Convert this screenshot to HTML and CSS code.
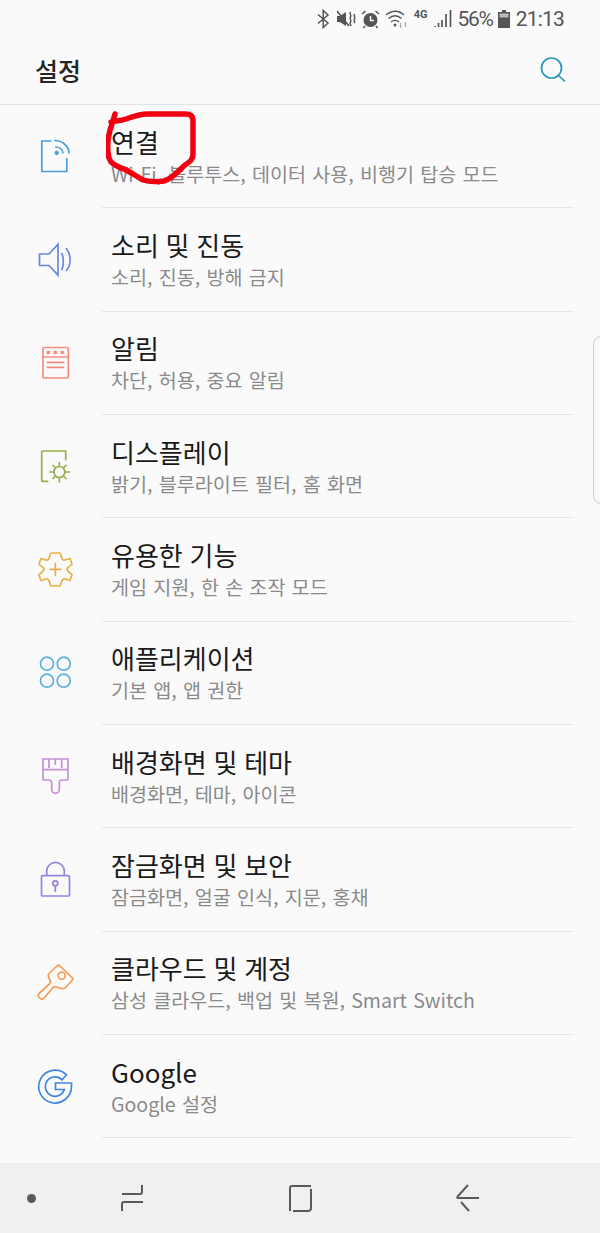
FILE: index.html
```html
<!DOCTYPE html>
<html lang="ko">
<head>
    <meta charset="UTF-8">
    <meta name="viewport" content="width=device-width, initial-scale=1.0">
    <title>설정</title>
    <link rel="stylesheet" href="styles.css">
</head>
<body>
    <div class="status-bar">
        <svg class="st-icon" width="13" height="20" viewBox="0 0 13 20"><path d="M1 5.500 11 14l-4.800 4.500V1.500L11 6 1 14.500" fill="none" stroke="#555" stroke-width="1.500"/></svg>
        <svg class="st-icon vol" width="20" height="20" viewBox="0 0 20 20"><path d="M0 7h3l6-4v14l-6-4H0z" fill="#555"/><path d="M0 2l12 15" stroke="#555" stroke-width="1.600"/><path d="M13.500 3c-1.500 2 1.500 3 0 5s1.500 3 0 5 1.500 3 0 4M17.500 5c-1.500 2 1.500 3 0 5s1 2 0 4" fill="none" stroke="#555" stroke-width="1.500"/></svg>
        <svg class="st-icon alarm" width="19" height="20" viewBox="0 0 19 20"><circle cx="9.500" cy="11" r="7" fill="#555"/><path d="M9.500 7v4.500h3.500" fill="none" stroke="#fafafa" stroke-width="1.500"/><path d="M1 5l3.500-3M18 5l-3.500-3M4 17l-1.500 2M15 17l1.500 2" stroke="#555" stroke-width="1.500"/></svg>
        <svg class="st-icon wifi" width="24" height="20" viewBox="0 0 24 20"><path d="M0 6c5.500-5 13-5 18 0M2.500 9.500c4-3.500 9-3.500 13 0M5 13c2.500-2 5.500-2 8 0" fill="none" stroke="#555" stroke-width="1.400"/><circle cx="9" cy="16" r="1.500" fill="#555"/><path d="M14.500 14v5M19.500 13v5" stroke="#aaa" stroke-width="1.300"/></svg>
        <span class="net">4G</span>
        <svg class="st-icon signal" width="18" height="20" viewBox="0 0 18 20"><path d="M1 18v-1M4.500 18v-4M8 18v-7M12 18V5M16.500 18V1" stroke="#555" stroke-width="1.700"/></svg>
        <span class="st-text">56%</span>
        <svg class="st-icon battery" width="12" height="20" viewBox="0 0 12 20"><path d="M4 1h4v2h4v16H0V3h4z" fill="#555"/><rect x="1.500" y="4.500" width="9" height="4" fill="#bbb"/></svg>
        <span class="st-text clock">21:13</span>
    </div>

    <div class="app-bar">
        <h1 class="app-title">설정</h1>
        <svg class="search" width="28" height="28" viewBox="0 0 28 28"><circle cx="12.500" cy="12" r="10" fill="none" stroke="#2b95bb" stroke-width="1.700"/><path d="M19.500 19.500l6.500 6" fill="none" stroke="#2b95bb" stroke-width="1.700"/></svg>
    </div>

    <ul class="menu">
        <li class="row">
            <svg class="icon" width="40" height="40" viewBox="0 0 40 40" stroke="#4a9fdc"><path d="M15.600 4H5.800v30.500h25V21"/><circle cx="20.700" cy="16" r="1.300" fill="#4a9fdc"/><path d="M19 10c4.500 0 8 2.500 8 6.500M18 3.500c8 0 15 5 15 13"/></svg>
            <div class="row-text"><div class="row-title">연결</div><div class="row-sub">Wi-Fi, 블루투스, 데이터 사용, 비행기 탑승 모드</div></div>
        </li>
        <li class="row">
            <svg class="icon" width="40" height="40" viewBox="0 0 40 40" stroke="#6a86e0"><path d="M3.500 14v11.500H13l9 9.500V4.500L13 14z"/><path d="M25.500 13c2.500 4 2.500 13 0 17M30 8c5.500 7 5.500 17 0 23"/></svg>
            <div class="row-text"><div class="row-title">소리 및 진동</div><div class="row-sub">소리, 진동, 방해 금지</div></div>
        </li>
        <li class="row">
            <svg class="icon" width="40" height="40" viewBox="0 0 40 40" stroke="#f48e84"><rect x="7" y="4.500" width="25.300" height="30.500" rx="1"/><path d="M7 14h25.300M10.700 19.300h17.600M10.700 24.400h17.600"/><g fill="#f48e84" stroke="none"><circle cx="12.300" cy="9.400" r="1.900"/><circle cx="19.300" cy="9.400" r="1.900"/><circle cx="26.300" cy="9.400" r="1.900"/></g></svg>
            <div class="row-text"><div class="row-title">알림</div><div class="row-sub">차단, 허용, 중요 알림</div></div>
        </li>
        <li class="row">
            <svg class="icon" width="40" height="40" viewBox="0 0 40 40" stroke="#93b04c"><path d="M29.700 13.300V4H6.700a1 1 0 0 0-1 1v28.300a1 1 0 0 0 1 1h5.600"/><circle cx="23.300" cy="25" r="5.500"/><path d="M23.300 15v4.500M23.300 30.500v5M13.300 25h4.500M29 25h5M16.500 18l3 3M27.500 29l3 3M30.500 18l-3 3M19.500 29l-3 3"/></svg>
            <div class="row-text"><div class="row-title">디스플레이</div><div class="row-sub">밝기, 블루라이트 필터, 홈 화면</div></div>
        </li>
        <li class="row">
            <svg class="icon" width="40" height="40" viewBox="0 0 40 40" stroke="#e9b04a"><path d="M15 3h9C25 3 25 9 27.500 10 30 11 33 8 34 8.500L36 14C36 15 31 17 31 19.300 31 21.600 36 24 36 25L34 30.500C33 31 30 28 27.500 29 25 30 25 36 24 36H15C14 36 14 30 11.500 29 9 28 6 31 5 30.500L3 25C3 24 8 21.600 8 19.300 8 17 3 15 3 14L5 8.500C6 8 9 11 11.500 10 14 9 14 3 15 3z"/><path d="M19.300 12.700V26M13.300 19.300h12.400"/></svg>
            <div class="row-text"><div class="row-title">유용한 기능</div><div class="row-sub">게임 지원, 한 손 조작 모드</div></div>
        </li>
        <li class="row">
            <svg class="icon" width="40" height="40" viewBox="0 0 40 40" stroke="#5cb1e0"><circle cx="11" cy="10.700" r="6.500"/><circle cx="27.700" cy="10.700" r="6.500"/><circle cx="11" cy="27.700" r="6.500"/><circle cx="27.700" cy="27.700" r="6.500"/></svg>
            <div class="row-text"><div class="row-title">애플리케이션</div><div class="row-sub">기본 앱, 앱 권한</div></div>
        </li>
        <li class="row">
            <svg class="icon" width="40" height="40" viewBox="0 0 40 40" stroke="#c491d2"><path d="M7 2h25v20c0 1-1 1-2 1h-4c-2 0-2.700 1-2.700 3v6.500a3.800 3.800 0 0 1-7.600 0V26c0-2-.7-3-2.700-3H9c-1 0-2 0-2-1zM7 12.600h25M13 2v9M19.300 2v6M25.700 2v9"/></svg>
            <div class="row-text"><div class="row-title">배경화면 및 테마</div><div class="row-sub">배경화면, 테마, 아이콘</div></div>
        </li>
        <li class="row">
            <svg class="icon" width="40" height="40" viewBox="0 0 40 40" stroke="#9a82dc"><rect x="5.500" y="15.700" width="28" height="20.300" rx="1"/><path d="M10.700 15.700v-4.500a8.800 8.800 0 0 1 17.600 0v4.500"/><circle cx="19.300" cy="23.300" r="2.500"/><path d="M19.300 25.800v6"/></svg>
            <div class="row-text"><div class="row-title">잠금화면 및 보안</div><div class="row-sub">잠금화면, 얼굴 인식, 지문, 홍채</div></div>
        </li>
        <li class="row">
            <svg class="icon" width="40" height="40" viewBox="0 0 40 40" stroke="#f49a55"><path d="M13 10.500 21 3C22 2 23 2 24 3L36 14.500C37 15.500 37 16.500 36 17.500L30 24C28.500 25.500 27 26 25 25.500L20.500 24C19 23.500 18 23.500 17 24.500L8.500 34.500C7 36.500 5 36.500 3.500 35 2 33.500 1.800 31.500 3.500 30L13.500 21C15 19.500 15 18.500 14 17L12.500 14C12 12.500 12 11.500 13 10.500z"/><circle cx="25.700" cy="12.700" r="3.500"/></svg>
            <div class="row-text"><div class="row-title">클라우드 및 계정</div><div class="row-sub">삼성 클라우드, 백업 및 복원, Smart Switch</div></div>
        </li>
        <li class="row">
            <svg class="icon" width="40" height="40" viewBox="0 0 40 40" stroke="#4285e0"><path d="M30.500 7.800A16.400 16.400 0 1 0 35.500 19.500V16H19.500V22.500H28.300A9.700 9.700 0 1 1 26 12.800z"/></svg>
            <div class="row-text"><div class="row-title">Google</div><div class="row-sub">Google 설정</div></div>
        </li>
    </ul>

    <div class="spacer"></div>

    <div class="nav-bar">
        <span class="nav-dot"></span>
        <svg class="nav-icon" width="24" height="28" viewBox="0 0 24 28"><path d="M22 1v7c0 1-1 2-2 2H2M23 18H4c-1 0-2 1-2 2v7"/></svg>
        <svg class="nav-icon" width="24" height="28" viewBox="0 0 24 28"><path d="M23 2H4C3 2 2 3 2 4v23M5 27h15c2 0 3-1 3-3V5"/></svg>
        <svg class="nav-icon" width="24" height="28" viewBox="0 0 24 28"><path d="M12 1L2 12c-1 1-1 2 0 2h21M5 18l8 9"/></svg>
    </div>

    <!-- 사진 위에 직접 그린 빨간 표시 -->
    <svg class="scribble" width="92" height="80" viewBox="0 0 92 80"><path d="M9 6 6 16C1 30 1 42 3 50 5 56 9 57 15 60 22 62 28 67 37 72 43 74 50 74 58 73 66 71 72 63 79 57 85 53 87 51 87 46L87 12C87 8 84 6 79 6L42 6C34 6 28 8 20 11 14 13 8 13 5 14"/></svg>
    <div class="edge-handle"></div>
</body>
</html>
```

FILE: styles.css
```css
* {
    box-sizing: border-box;
}

body {
    font-family: "Noto Sans CJK KR", "Noto Sans", sans-serif;
    background: #fafafa;
    margin: 0;
    height: 1233px;
    width: 600px;
    position: relative;
    overflow: hidden;
    display: flex;
    flex-direction: column;
}

.status-bar {
    height: 37px;
    display: flex;
    align-items: center;
    justify-content: flex-end;
    padding: 0 36px 0 0;
    color: #555;
}

.st-icon {
    margin-left: 6px;
}

.vol {
    margin-left: 7px;
}

.alarm {
    margin-left: 4px;
}

.battery {
    margin-left: 5px;
}

.net {
    font-family: Roboto, sans-serif;
    font-size: 11px;
    font-weight: 700;
    margin: 0 0 8px 4px;
}

.st-text {
    font-family: Roboto, sans-serif;
    font-size: 21px;
    margin-left: 6px;
    letter-spacing: -1.300px;
}

.clock {
    letter-spacing: -0.800px;
}

.app-bar {
    height: 68px;
    display: flex;
    align-items: center;
    justify-content: space-between;
    padding: 0 33px 1px 35px;
    border-bottom: 1px solid #e4e4e4;
}

.app-title {
    font-size: 25px;
    font-weight: 500;
    color: #252525;
    margin: 0;
}

.menu {
    list-style: none;
    margin: 0;
    padding: 0;
}

.row {
    height: 103.33px;
    display: flex;
    align-items: center;
    position: relative;
}

.row::after {
    content: "";
    position: absolute;
    left: 102px;
    right: 26px;
    bottom: 0;
    height: 1px;
    background: #e6e6e6;
}

.icon {
    width: 40px;
    height: 40px;
    margin: 0 35px 0 36px;
    flex-shrink: 0;
    fill: none;
    stroke-width: 1.700;
}

.row-title {
    font-size: 26px;
    line-height: 33px;
    word-spacing: -0.500px;
    color: #1a1a1a;
}

.row-sub {
    font-size: 19.600px;
    line-height: 31px;
    word-spacing: 0.700px;
    color: #8a8a8a;
}

.spacer {
    flex: 1;
}

.nav-bar {
    height: 70px;
    background: #f0f0f0;
    display: flex;
    align-items: center;
    position: relative;
    padding-left: 120px;
    gap: 144px;
}

.nav-dot {
    position: absolute;
    left: 27px;
    top: 31px;
    width: 9px;
    height: 9px;
    border-radius: 50%;
    background: #5a5a5a;
}

.nav-icon {
    fill: none;
    stroke: #5a5a5a;
    stroke-width: 2;
}

.scribble {
    position: absolute;
    left: 106px;
    top: 108px;
    fill: none;
    stroke: #f00010;
    stroke-width: 5.500;
    stroke-linecap: round;
    stroke-linejoin: round;
}

.edge-handle {
    position: absolute;
    left: 593px;
    top: 336px;
    width: 12px;
    height: 168px;
    border: 1px solid #d0d0d0;
    border-radius: 8px 0 0 8px;
}
```
